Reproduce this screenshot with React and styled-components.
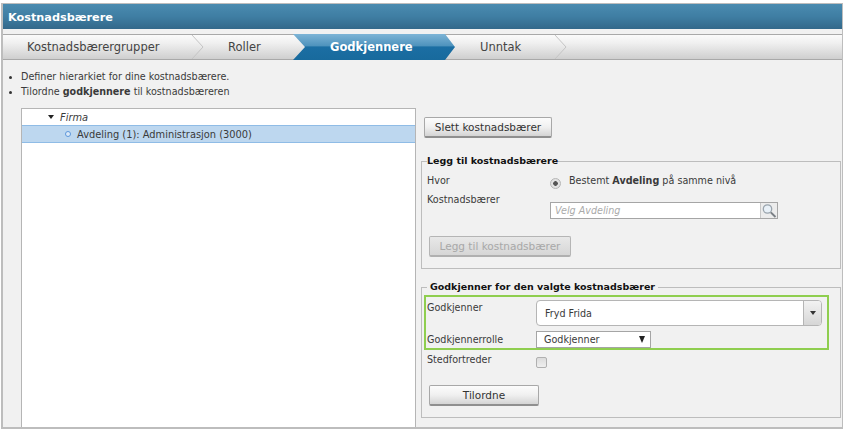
import styled, { createGlobalStyle } from "styled-components";

const GlobalStyle = createGlobalStyle`
  html, body { margin: 0; padding: 0; background: #fff; }
  body { font-family: "DejaVu Sans", Verdana, sans-serif; font-size: 9.6px; color: #3a3a3a; }
`;

const Frame = styled.div`
  box-sizing: border-box;
  width: 842px;
  height: 426px;
  margin: 3px 0 0 1px;
  border: 2px solid #bdbdbd;
  border-top-width: 1px;
  border-right-width: 1px;
  background: #f1f1f1;
  display: flex;
  flex-direction: column;
`;

const Header = styled.div`
  box-sizing: border-box;
  height: 25px;
  flex: none;
  display: flex;
  align-items: center;
  padding: 2px 0 0 5px;
  background: linear-gradient(#4a8bb0, #3f7ea3 50%, #33688a);
  color: #fff;
  font-size: 11.25px;
  font-weight: 700;
`;

const TabBar = styled.div`
  margin-top: 5px;
  height: 24px;
  flex: none;
  display: flex;
  border-top: 1px solid #a9a9a9;
  border-bottom: 1px solid #a9a9a9;
  background: linear-gradient(#fbfbfb, #efefef 35%, #cfcfcf);
  font-size: 11.5px;
  color: #444;
`;

const Tab = styled.div`
  flex: none;
  width: ${(p) => p.$width}px;
  padding-left: ${(p) => p.$inset}px;
  box-sizing: border-box;
  display: flex;
  align-items: center;
  white-space: nowrap;
`;

const ActiveTab = styled(Tab)`
  margin-top: -1px;
  margin-bottom: -1px;
  background: linear-gradient(#7db4d6, #4f93bd 45%, #1b6ea3 50%, #186a9d);
  clip-path: polygon(0 0, 152px 0, 162px 50%, 152px 100%, 0 100%, 12px 50%);
  color: #fff;
  font-weight: 700;
`;

const Chevron = styled.svg`
  flex: none;
  width: 14px;
  height: 24px;
  margin-left: -14px;
`;

const Content = styled.div`
  flex: 1;
  min-height: 0;
  display: flex;
  flex-direction: column;
`;

const Notes = styled.ul`
  margin: 10px 0 0;
  padding: 0 0 0 18px;
  list-style: none;
  line-height: 14.5px;
  height: 38px;
`;

const Note = styled.li`
  position: relative;
  &::before {
    content: "";
    position: absolute;
    left: -12px;
    top: 6px;
    width: 3px;
    height: 3px;
    border-radius: 50%;
    background: #333;
  }
`;

const Columns = styled.div`
  flex: 1;
  min-height: 0;
  display: flex;
  padding-left: 18px;
`;

const Tree = styled.div`
  box-sizing: border-box;
  width: 395px;
  flex: none;
  background: #fff;
  border: 1px solid #b5b5b5;
  border-bottom: none;
  font-size: 9.85px;
`;

const TreeRoot = styled.div`
  height: 16px;
  display: flex;
  align-items: center;
  padding-left: 26px;
  gap: 6px;
  font-style: italic;
`;

const Caret = styled.span`
  width: 0;
  height: 0;
  border-left: 3.5px solid transparent;
  border-right: 3.5px solid transparent;
  border-top: 4px solid #222;
`;

const TreeRow = styled.div`
  height: 16px;
  display: flex;
  align-items: center;
  gap: 6px;
  padding-left: 43px;
  background: #bdd7ef;
  border-top: 1px solid #8fbce6;
  border-bottom: 1px solid #8fbce6;
`;

const NodeDot = styled.span`
  width: 4px;
  height: 4px;
  border: 1.5px solid #5b97dc;
  border-radius: 50%;
  background: #dbe9f7;
`;

const Side = styled.div`
  flex: 1;
  min-width: 0;
  padding: 9px 1px 0 5px;
  display: flex;
  flex-direction: column;
`;

const Button = styled.button`
  box-sizing: border-box;
  width: ${(p) => p.$width}px;
  height: 21px;
  padding: 0;
  font: inherit;
  font-size: 10.5px;
  color: ${(p) => (p.disabled ? "#a8a8a8" : "#333")};
  border: 1px solid ${(p) => (p.disabled ? "#b5b5b5" : "#a8a8a8")};
  border-bottom: 2px solid ${(p) => (p.disabled ? "#b0b0b0" : "#8f8f8f")};
  border-radius: 2px;
  background: ${(p) =>
    p.disabled
      ? "linear-gradient(#e8e8e8, #d6d6d6)"
      : "linear-gradient(#fcfcfc, #f0f0f0 50%, #d4d4d4)"};
`;

const DeleteButton = styled(Button)`
  margin-left: 3px;
`;

const Group = styled.fieldset`
  box-sizing: border-box;
  margin: ${(p) => p.$top}px 0 0;
  height: ${(p) => p.$height}px;
  padding: 0 0 0 5px;
  border: 1px solid #bdbdbd;
  min-width: 0;
`;

const GroupTitle = styled.legend`
  padding: 0 ${(p) => p.$pad}px;
  font-size: 9.5px;
  font-weight: 700;
  color: #111;
  line-height: 12px;
`;

const Row = styled.div`
  display: grid;
  grid-template-columns: ${(p) => p.$label}px 1fr;
  align-items: ${(p) => (p.$centered ? "center" : "start")};
  margin-top: ${(p) => p.$top || 0}px;
`;

const TopLabel = styled.span`
  padding-top: 2px;
`;

const Radio = styled.span`
  box-sizing: border-box;
  flex: none;
  width: 11px;
  height: 11px;
  margin-top: 3px;
  border-radius: 50%;
  border: 1px solid #b5b5b5;
  background: radial-gradient(circle, #555 0 2px, #e2e2e2 2.6px);
`;

const RadioRow = styled.div`
  display: flex;
  gap: 8px;
  padding-left: 1px;
`;

const Search = styled.div`
  display: flex;
  width: 228px;
  height: 17px;
  box-sizing: border-box;
  margin: 8px 0 0 1px;
  border: 1px solid #a5a5a5;
  background: #fff;
`;

const SearchText = styled.span`
  flex: 1;
  padding-left: 4px;
  font-style: italic;
  color: #aaa;
  line-height: 15px;
`;

const SearchButton = styled.span`
  width: 16px;
  background: #ececec;
  border-left: 1px solid #c8c8c8;
  display: flex;
  align-items: center;
  justify-content: center;
`;

const AddButton = styled(Button)`
  display: block;
  margin: 17px 0 0 2px;
`;

const Highlight = styled.div`
  box-sizing: border-box;
  width: 405px;
  height: 55px;
  margin: 2px 0 0 -3px;
  padding: 3px 0 0 1px;
  border: 2px solid #8fce4f;
`;

const PersonSelect = styled.div`
  box-sizing: border-box;
  width: 286px;
  height: 26px;
  display: flex;
  align-items: center;
  justify-content: space-between;
  border: 1px solid #b5b5b5;
  border-radius: 4px;
  background: #fff;
  overflow: hidden;
  padding-left: 8px;
`;

const SelectArrow = styled.span`
  align-self: stretch;
  width: 17px;
  display: flex;
  align-items: center;
  justify-content: center;
  background: linear-gradient(#f2f2f2, #d6d6d6);
  border-left: 1px solid #b5b5b5;
  &::after {
    content: "";
    border-left: 3px solid transparent;
    border-right: 3px solid transparent;
    border-top: 4px solid #333;
  }
`;

const RoleSelect = styled.div`
  box-sizing: border-box;
  width: 115px;
  height: 17px;
  display: flex;
  align-items: center;
  justify-content: space-between;
  padding: 0 5px 0 7px;
  border: 1px solid #a5a5a5;
  background: #fff;
  &::after {
    content: "";
    border-left: 3.5px solid transparent;
    border-right: 3.5px solid transparent;
    border-top: 7px solid #222;
  }
`;

const Checkbox = styled.span`
  display: block;
  box-sizing: border-box;
  width: 11px;
  height: 11px;
  margin-top: 3px;
  border: 1px solid #b0b0b0;
  border-radius: 2px;
  background: linear-gradient(#dcdcdc, #efefef);
`;

const App = () => {
  return (
    <>
      <GlobalStyle />
      <Frame>
        <Header>Kostnadsbærere</Header>
        <TabBar>
          <Tab $width={202} $inset={24}>Kostnadsbærergrupper</Tab>
          <Chevron viewBox="0 0 14 24">
            <path d="M1 0 L12 12 L1 24" fill="none" stroke="#c4c4c4" />
          </Chevron>
          <Tab $width={88} $inset={23}>Roller</Tab>
          <ActiveTab $width={162} $inset={37}>Godkjennere</ActiveTab>
          <Tab $width={113} $inset={25}>Unntak</Tab>
          <Chevron viewBox="0 0 14 24">
            <path d="M1 0 L12 12 L1 24" fill="none" stroke="#c4c4c4" />
          </Chevron>
        </TabBar>
        <Content>
          <Notes>
            <Note>Definer hierarkiet for dine kostnadsbærere.</Note>
            <Note>Tilordne <b>godkjennere</b> til kostnadsbæreren</Note>
          </Notes>
          <Columns>
            <Tree>
              <TreeRoot><Caret />Firma</TreeRoot>
              <TreeRow><NodeDot />Avdeling (1): Administrasjon (3000)</TreeRow>
            </Tree>
            <Side>
              <DeleteButton $width={128}>Slett kostnadsbærer</DeleteButton>
              <Group $top={17} $height={114}>
                <GroupTitle $pad={0}>Legg til kostnadsbærere</GroupTitle>
                <Row $label={122} $top={8}>
                  <span>Hvor</span>
                  <RadioRow>
                    <Radio />
                    <span>Bestemt <b>Avdeling</b> på samme nivå</span>
                  </RadioRow>
                </Row>
                <Row $label={122} $top={5}>
                  <span>Kostnadsbærer</span>
                  <Search>
                    <SearchText>Velg Avdeling</SearchText>
                    <SearchButton>
                      <svg width="16" height="16" viewBox="0 0 16 16">
                        <circle cx="6.5" cy="6" r="4.2" fill="#e8f0f7" stroke="#9aa4ad" strokeWidth="1.3" />
                        <path d="M9.8 9.4 L14.5 14" stroke="#7a7f85" strokeWidth="2" />
                      </svg>
                    </SearchButton>
                  </Search>
                </Row>
                <AddButton $width={142} disabled>Legg til kostnadsbærer</AddButton>
              </Group>
              <Group $top={12} $height={137}>
                <GroupTitle $pad={3}>Godkjenner for den valgte kostnadsbærer</GroupTitle>
                <Highlight>
                  <Row $label={109}>
                    <TopLabel>Godkjenner</TopLabel>
                    <PersonSelect>Fryd Frida<SelectArrow /></PersonSelect>
                  </Row>
                  <Row $label={109} $top={5} $centered>
                    <span>Godkjennerrolle</span>
                    <RoleSelect>Godkjenner</RoleSelect>
                  </Row>
                </Highlight>
                <Row $label={109} $top={4}>
                  <span>Stedfortreder</span>
                  <Checkbox />
                </Row>
                <AddButton $width={110}>Tilordne</AddButton>
              </Group>
            </Side>
          </Columns>
        </Content>
      </Frame>
    </>
  );
};

export default App;
